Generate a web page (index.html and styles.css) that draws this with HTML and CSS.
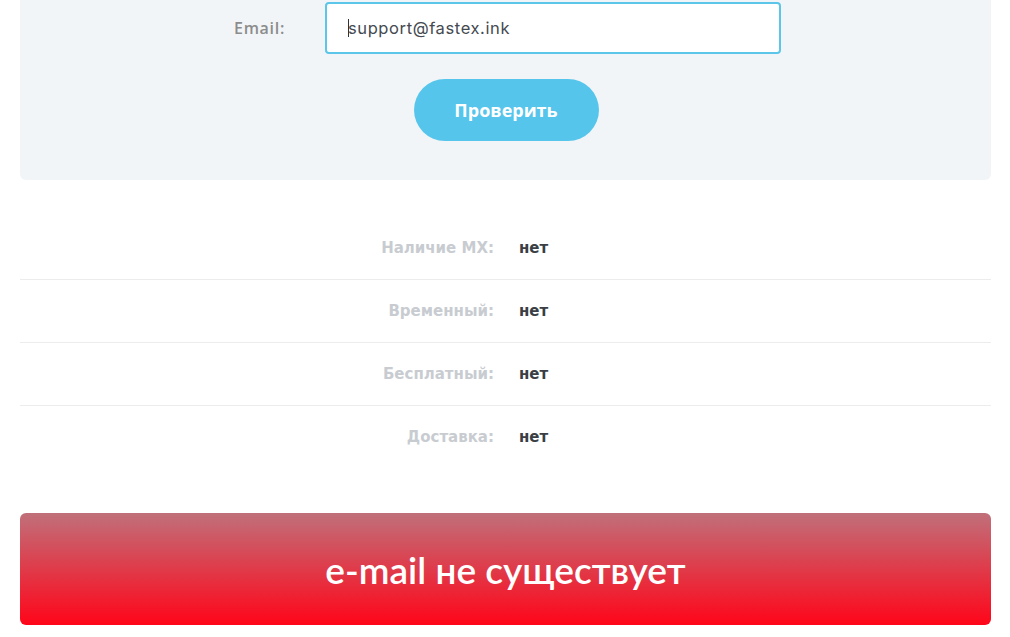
FILE: index.html
```html
<!DOCTYPE html>
<html>
<head>
  <title>Проверка email</title>
  <link rel="stylesheet" href="styles.css">
</head>
<body>
  <div class="page">
    <div class="check-panel">
      <div class="email-row">
        <label class="email-label" for="email">Email:</label>
        <div class="email-input"><span class="caret"></span>support@fastex.ink</div>
      </div>
      <div class="submit-row">
        <button class="check-btn">Проверить</button>
      </div>
    </div>

    <div class="results">
      <div class="result-row">
        <span class="result-label">Наличие MX:</span>
        <span class="result-value">нет</span>
      </div>
      <div class="result-row">
        <span class="result-label">Временный:</span>
        <span class="result-value">нет</span>
      </div>
      <div class="result-row">
        <span class="result-label">Бесплатный:</span>
        <span class="result-value">нет</span>
      </div>
      <div class="result-row">
        <span class="result-label">Доставка:</span>
        <span class="result-value">нет</span>
      </div>
    </div>

    <div class="verdict">e-mail не существует</div>
  </div>
</body>
</html>
```

FILE: styles.css
```css
body {
  margin: 0;
  background: #ffffff;
  font-family: 'DejaVu Sans', 'Open Sans', sans-serif;
  color: #3a3f45;
}

.page {
  padding: 0 19px 0 20px;
}

/* top form panel, scrolled partly out of view */
.check-panel {
  background-color: #f2f5f7;
  border-radius: 0 0 6px 6px;
  padding: 2px 0 39px;
}

.email-row {
  display: flex;
  align-items: center;
}

.email-label {
  width: 265px;
  text-align: right;
  font-family: 'Open Sans', sans-serif;
  font-size: 16px;
  font-weight: 600;
  letter-spacing: 0.7px;
  color: #8c8c8c;
  margin-right: 40px;
}

.email-input {
  width: 456px;
  height: 52px;
  box-sizing: border-box;
  border: 2px solid #5bc5ea;
  border-radius: 4px;
  background: #ffffff;
  padding-left: 21px;
  display: flex;
  align-items: center;
  font-family: 'Inter', sans-serif;
  font-size: 16.5px;
  letter-spacing: 0.6px;
  color: #444a50;
}

.caret {
  width: 1px;
  height: 18px;
  background: #333;
  margin-right: -1px;
}

.submit-row {
  display: flex;
  justify-content: center;
  margin-top: 25px;
}

.check-btn {
  width: 185px;
  height: 62px;
  border: none;
  border-radius: 31px;
  background-color: #55c5ec;
  color: #ffffff;
  font-family: 'Open Sans', sans-serif;
  font-size: 18px;
  font-weight: 700;
  margin-left: 1px;
}

.results {
  margin-top: 37px;
}

.result-row {
  display: grid;
  grid-template-columns: 474px 1fr;
  column-gap: 25px;
  align-items: center;
  height: 62px;
  border-bottom: 1px solid #ececec;
  font-size: 15px;
  font-weight: 700;
}

.result-row:last-child {
  border-bottom: none;
}

.result-label {
  text-align: right;
  color: #c8ccd1;
}

.result-value {
  color: #3a3f45;
}

.verdict {
  margin-top: 45px;
  height: 112px;
  border-radius: 6px;
  background: linear-gradient(to bottom, #c0707a, #ff0519);
  color: #ffffff;
  display: flex;
  align-items: center;
  justify-content: center;
  font-family: 'Lato', sans-serif;
  font-size: 37px;
  font-weight: 600;
}
```
